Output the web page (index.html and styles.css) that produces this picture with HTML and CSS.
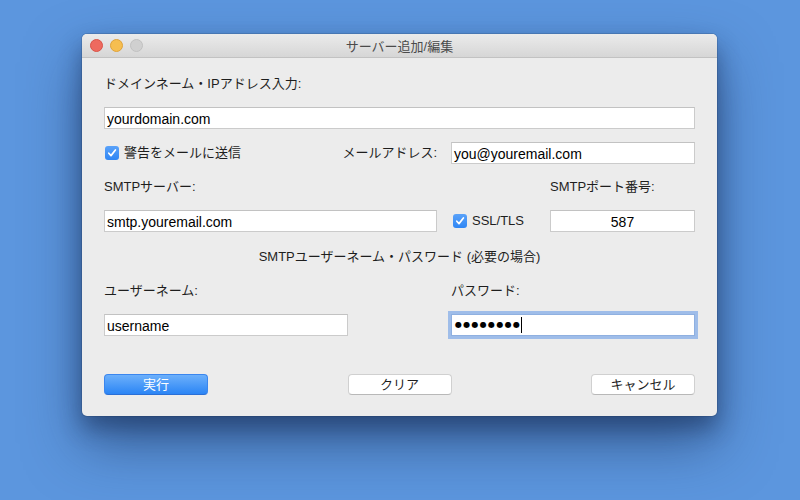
FILE: index.html
```html
<!DOCTYPE html>
<html lang="ja">
<head>
    <meta charset="UTF-8">
    <title>サーバー追加/編集</title>
    <link rel="stylesheet" href="styles.css">
</head>
<body>
    <div class="window">
        <div class="titlebar">
            <div class="lights">
                <span class="light red"></span>
                <span class="light yellow"></span>
                <span class="light grey"></span>
            </div>
            <div class="title">サーバー追加/編集</div>
        </div>
        <div class="content">
            <div class="label">ドメインネーム・IPアドレス入力:</div>
            <div class="field full gap14">yourdomain.com</div>

            <div class="row gap13">
                <div class="check-group">
                    <span class="checkbox"><svg width="10" height="10" viewBox="0 0 10 10"><path d="M1.8 5.2 L4 7.6 L8.4 2" fill="none" stroke="#fff" stroke-width="1.7" stroke-linecap="round" stroke-linejoin="round"/></svg></span>
                    <span>警告をメールに送信</span>
                </div>
                <div class="label mail-label">メールアドレス:</div>
                <div class="field half">you@youremail.com</div>
            </div>

            <div class="smtp-grid gap14">
                <div class="label">SMTPサーバー:</div>
                <div></div>
                <div class="label">SMTPポート番号:</div>
            </div>
            <div class="smtp-grid gap14">
                <div class="field">smtp.youremail.com</div>
                <div class="check-group ssl">
                    <span class="checkbox"><svg width="10" height="10" viewBox="0 0 10 10"><path d="M1.8 5.2 L4 7.6 L8.4 2" fill="none" stroke="#fff" stroke-width="1.7" stroke-linecap="round" stroke-linejoin="round"/></svg></span>
                    <span>SSL/TLS</span>
                </div>
                <div class="field center">587</div>
            </div>

            <div class="label section gap16">SMTPユーザーネーム・パスワード (必要の場合)</div>

            <div class="pair gap16">
                <div class="label">ユーザーネーム:</div>
                <div class="label">パスワード:</div>
            </div>
            <div class="pair gap14">
                <div class="field">username</div>
                <div class="field focused"><span class="dots">●●●●●●●●</span><span class="caret"></span></div>
            </div>

            <div class="buttons">
                <div class="btn primary">実行</div>
                <div class="btn">クリア</div>
                <div class="btn">キャンセル</div>
            </div>
        </div>
    </div>
</body>
</html>
```

FILE: styles.css
```css
html {
    background: #5c96de;
}
body {
    margin: 0;
    min-height: 500px;
    padding-top: 34px;
    box-sizing: border-box;
    background: #5c96de;
    font-family: "Liberation Sans", "Noto Sans CJK JP", sans-serif;
    font-size: 13px;
    color: #1e1e1e;
}
.window {
    width: 635px;
    margin-left: 82px;
    background: #ececec;
    border-radius: 5px;
    box-shadow: 0 12px 22px rgba(20, 40, 80, 0.45), 0 28px 56px rgba(20, 40, 80, 0.5), 0 0 0 1px rgba(0, 0, 0, 0.12);
    overflow: hidden;
}
.titlebar {
    height: 23px;
    position: relative;
    background: linear-gradient(#ebebeb, #d6d6d6);
    border-bottom: 1px solid #c2c2c2;
    display: flex;
    align-items: center;
    justify-content: center;
}
.lights {
    position: absolute;
    left: 8px;
    top: 5px;
    display: flex;
    gap: 7px;
}
.light {
    width: 13px;
    height: 13px;
    border-radius: 50%;
    box-sizing: border-box;
}
.red {
    background: #ee6a5f;
    border: 1px solid #d95347;
}
.yellow {
    background: #f6be50;
    border: 1px solid #dfa23a;
}
.grey {
    background: #d0d0d0;
    border: 1px solid #c0c0c0;
}
.title {
    color: #4b4b4b;
    font-size: 13px;
}
.content {
    padding: 17px 22px 21px;
}
.label {
    line-height: 18px;
    height: 18px;
}
.gap13 {
    margin-top: 13px;
}
.gap14 {
    margin-top: 14px;
}
.gap16 {
    margin-top: 16px;
}
.field {
    height: 22px;
    line-height: 22px;
    box-sizing: border-box;
    background: #fff;
    border: 1px solid #cbcbcb;
    border-top-color: #c2c2c2;
    padding: 0 2px;
    color: #000;
    font-size: 14px;
    white-space: nowrap;
}
.center {
    text-align: center;
}
.row {
    display: flex;
    align-items: center;
}
.check-group {
    display: flex;
    align-items: center;
    gap: 5px;
    flex: 1;
    line-height: 18px;
}
.checkbox {
    width: 14px;
    height: 14px;
    border-radius: 3px;
    background: linear-gradient(#5aa2f9, #2f86f4);
    display: flex;
    align-items: center;
    justify-content: center;
    margin-left: 1px;
}
.mail-label {
    margin-right: 14px;
}
.half {
    width: 244px;
}
.smtp-grid {
    display: grid;
    grid-template-columns: 333px 1fr 145px;
    align-items: center;
}
.ssl {
    padding-left: 15px;
}
.section {
    text-align: center;
}
.pair {
    display: grid;
    grid-template-columns: 244px 244px;
    justify-content: space-between;
}
.focused {
    box-shadow: 0 0 0 3px #9fbde9;
    border-color: #8fb0e0;
    display: flex;
    align-items: center;
}
.dots {
    font-family: "DejaVu Sans", sans-serif;
    font-size: 8px;
    letter-spacing: 1.3px;
    padding-left: 1px;
}
.caret {
    width: 1px;
    height: 16px;
    background: #000;
}
.buttons {
    margin-top: 38px;
    display: flex;
    justify-content: space-between;
}
.btn {
    width: 104px;
    height: 21px;
    line-height: 20px;
    box-sizing: border-box;
    text-align: center;
    background: #fff;
    border: 1px solid #d0d0d0;
    border-bottom-color: #b8b8b8;
    border-radius: 4px;
    color: #1e1e1e;
}
.primary {
    background: linear-gradient(#6cb0fb, #2b85f5);
    border-color: #3b86ee;
    border-bottom-color: #2a6fd6;
    color: #fff;
}
```
